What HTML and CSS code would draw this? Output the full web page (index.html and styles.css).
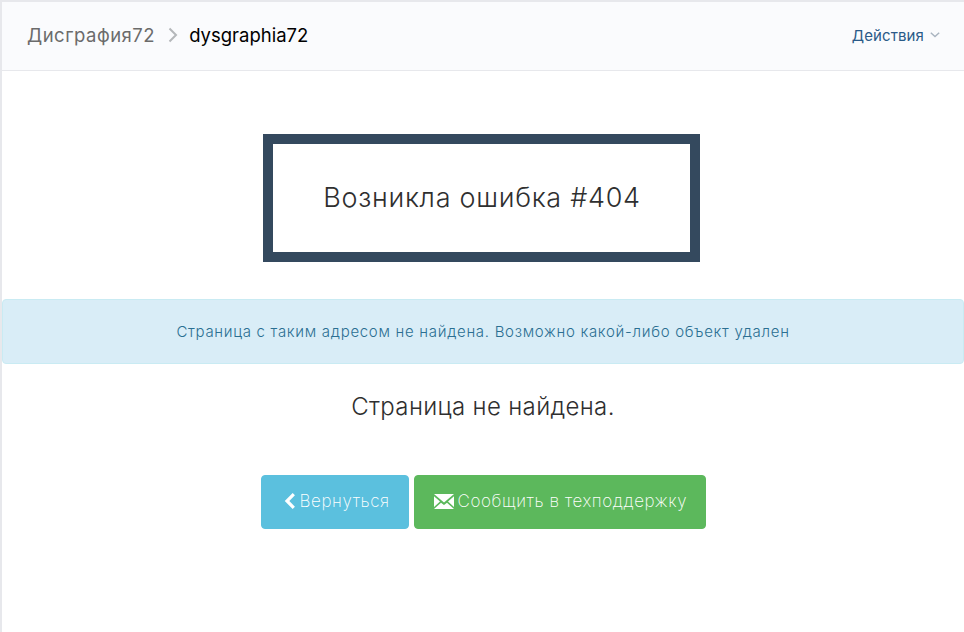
FILE: index.html
```html
<!DOCTYPE html>
<html lang="ru">
<head>
<meta charset="UTF-8">
<meta name="viewport" content="width=device-width, initial-scale=1.0">
<title>Ошибка 404</title>
<link rel="stylesheet" href="styles.css">
</head>
<body>
  <div class="panel">
    <header class="panel-head">
      <nav class="crumbs">
        <a class="crumb" href="#">Дисграфия72</a>
        <svg class="crumb-sep" width="10" height="16" viewBox="0 0 10 16"><path d="M1.5 1.5 L8 8 L1.5 14.5" fill="none" stroke="#b4b7ba" stroke-width="2"/></svg>
        <span class="crumb-current">dysgraphia72</span>
      </nav>
      <a class="actions" href="#">Действия
        <svg class="caret" width="10" height="6" viewBox="0 0 10 6"><path d="M0.8 0.8 L5 4.6 L9.2 0.8" fill="none" stroke="#a9b4c0" stroke-width="1.4"/></svg>
      </a>
    </header>

    <section class="content">
      <div class="error-frame">Возникла ошибка #404</div>
      <div class="alert">Страница с таким адресом не найдена. Возможно какой-либо объект удален</div>
      <h4 class="message">Страница не найдена.</h4>
      <div class="buttons">
        <a class="btn btn-info" href="#">
          <svg class="btn-icon" width="12" height="16" viewBox="0 0 12 16"><path d="M9.8 1.2 L3 8 L9.8 14.8" fill="none" stroke="#fff" stroke-width="3.2"/></svg>
          Вернуться
        </a>
        <a class="btn btn-success" href="#">
          <svg class="btn-icon" width="20" height="15" viewBox="0 0 20 15"><path d="M0 0 H20 L10 8.5 Z M0 2.2 L6 7.5 L0 13 Z M20 2.2 L14 7.5 L20 13 Z M0 15 L7 8.8 L10 11 L13 8.8 L20 15 Z" fill="#fff"/></svg>
          Сообщить в техподдержку
        </a>
      </div>
    </section>
  </div>
</body>
</html>
```

FILE: styles.css
```css
html, body { height: 100%; }
body { margin: 0; background: #fff; color: #2f2f2f; font-family: Inter, "Open Sans", sans-serif; font-weight: 300; overflow: hidden; }
a { text-decoration: none; }

.panel { min-height: 100%; box-sizing: border-box; border-top: 2px solid #e7e8ec; border-left: 2px solid #e7e8ec; }
.panel-head { height: 69px; box-sizing: border-box; padding: 0 24px 2px 25px; display: flex; align-items: center; justify-content: space-between; background: #fafbfd; border-bottom: 1px solid #e7e8ec; }
.crumbs { display: flex; align-items: center; font-size: 18.5px; font-weight: 400; }
.crumb { color: #6b6b6b; letter-spacing: .5px; }
.crumb-sep { margin: 0 11px 0 13px; }
.crumb-current { color: #000; }
.actions { color: #2a5a88; font-size: 15px; font-weight: 400; letter-spacing: .1px; display: flex; align-items: center; gap: 6px; }

.content { display: flex; flex-direction: column; align-items: center; padding-top: 63px; }
.error-frame { width: 437px; height: 128px; margin-right: 4px; box-sizing: border-box; border: 10px solid #34495e; display: flex; align-items: center; justify-content: center; font-size: 27px; letter-spacing: .7px; padding: 0 0 2px 2px; }
.alert { align-self: stretch; height: 65px; box-sizing: border-box; margin-top: 37px; display: flex; align-items: center; justify-content: center; background: #d9edf7; border: 1px solid #c9ebf3; border-radius: 4px; color: #2b6f92; font-size: 15px; letter-spacing: .7px; }
.message { margin: 29px 0 0; font-size: 24px; font-weight: 300; line-height: 28px; letter-spacing: .35px; }
.buttons { display: flex; gap: 5px; margin-top: 54px; }
.btn { height: 54px; box-sizing: border-box; display: flex; align-items: center; gap: 4px; border-radius: 4px; color: #fff; font-size: 17px; font-weight: 200; letter-spacing: .6px; padding-bottom: 2px; }
.btn-info { width: 148px; padding-left: 22px; background: #5bc0de; border: 1px solid #5bc0de; }
.btn-success { width: 292px; padding-left: 19px; background: #5cb85c; border: 1px solid #5cb85c; }
```
